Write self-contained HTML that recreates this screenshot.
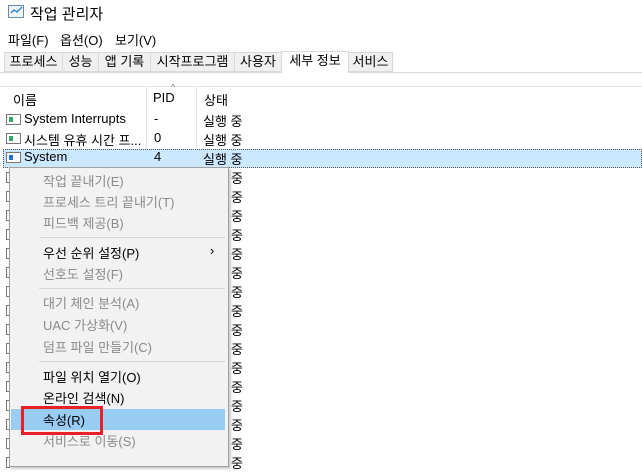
<!DOCTYPE html><html><head><meta charset="utf-8"><style>
*{margin:0;padding:0;box-sizing:border-box}
body{width:642px;height:458px;overflow:hidden;background:#fff;position:relative;font-family:"Liberation Sans","Noto Sans CJK KR","NanumGothic",sans-serif;font-size:13px;color:#000}
.a{position:absolute;white-space:nowrap}
.tab{position:absolute;top:52px;height:20px;border:1px solid #d9d9d9;background:#f0f0f0;line-height:18px;text-align:center;font-size:13px}
.ic{position:absolute;left:6px;width:15px;height:11px;border:1px solid #777;background:#fff}
.ic i{position:absolute;left:2px;top:2px;width:4px;height:5px;background:#3a6}
.m{position:absolute;left:43px;font-size:13px}
.g{color:#8a8a8a}
.sep{position:absolute;left:39px;width:186px;height:1px;background:#d7d7d7}
</style></head><body>
<div class="a" style="left:8px;top:5px;width:16px;height:13px;border:1px solid #6b8aa8;background:#eef6fb"></div>
<svg class="a" style="left:10px;top:6px" width="14" height="10"><polyline points="1,7 4,4 7,6 12,1" fill="none" stroke="#2a7fd0" stroke-width="1.3"/></svg>
<div class="a" style="left:30px;top:3px;font-size:15px">작업 관리자</div>
<div class="a" style="left:8px;top:30px">파일(F)</div>
<div class="a" style="left:60px;top:30px">옵션(O)</div>
<div class="a" style="left:115px;top:30px">보기(V)</div>
<div class="a" style="left:0;top:72px;width:642px;height:1px;background:#d9d9d9"></div>
<div class="tab" style="left:4px;width:59px">프로세스</div>
<div class="tab" style="left:62px;width:37px">성능</div>
<div class="tab" style="left:98px;width:53px">앱 기록</div>
<div class="tab" style="left:150px;width:85px">시작프로그램</div>
<div class="tab" style="left:234px;width:48px">사용자</div>
<div class="tab" style="left:281px;top:51px;height:22px;width:68px;background:#fff;border-bottom:none">세부 정보</div>
<div class="tab" style="left:348px;width:45px">서비스</div>
<div class="a" style="left:0;top:86px;width:642px;height:1px;background:#e5e5e5"></div>
<div class="a" style="left:146px;top:86px;width:1px;height:372px;background:#e5e5e5"></div>
<div class="a" style="left:196px;top:86px;width:1px;height:372px;background:#e5e5e5"></div>
<div class="a" style="left:13px;top:90px">이름</div>
<div class="a" style="left:153px;top:90px">PID</div>
<div class="a" style="left:171px;top:82px;font-size:9px;color:#777">^</div>
<div class="a" style="left:204px;top:90px">상태</div>
<div class="ic" style="top:114px"><i></i></div><div class="a" style="left:24px;top:111px">System Interrupts</div><div class="a" style="left:154px;top:111px">-</div><div class="a" style="left:203px;top:111px">실행 중</div>
<div class="ic" style="top:133px"><i></i></div><div class="a" style="left:24px;top:130px">시스템 유휴 시간 프...</div><div class="a" style="left:154px;top:130px">0</div><div class="a" style="left:203px;top:130px">실행 중</div>
<div class="a" style="left:3px;top:149px;width:639px;height:19px;background:#cce8ff;border:1px dotted #555"></div>
<div class="ic" style="top:152px"><i style="background:#1a6fd8"></i></div><div class="a" style="left:24px;top:149px">System</div><div class="a" style="left:154px;top:149px">4</div><div class="a" style="left:203px;top:149px">실행 중</div>
<div id="z"></div>
<script>
var s='';for(var y=168;y<458;y+=19){s+='<div class="a" style="left:231px;top:'+y+'px">중</div><div class="a" style="left:6px;top:'+(y+4)+'px;width:4px;height:11px;border:1px solid #777;border-right:none"></div>';}
document.getElementById('z').innerHTML=s;
</script>
<div class="a" style="left:9px;top:167px;width:220px;height:300px;background:#f2f2f2;border:1px solid #a0a0a0;box-shadow:2px 2px 2px rgba(0,0,0,.2)"></div>
<div class="m g" style="top:171px">작업 끝내기(E)</div>
<div class="m g" style="top:192px">프로세스 트리 끝내기(T)</div>
<div class="m g" style="top:213px">피드백 제공(B)</div>
<div class="sep" style="top:237px"></div>
<div class="m" style="top:243px">우선 순위 설정(P)</div>
<div class="a" style="left:210px;top:243px">›</div>
<div class="m g" style="top:264px">선호도 설정(F)</div>
<div class="sep" style="top:288px"></div>
<div class="m g" style="top:293px">대기 체인 분석(A)</div>
<div class="m g" style="top:315px">UAC 가상화(V)</div>
<div class="m g" style="top:337px">덤프 파일 만들기(C)</div>
<div class="sep" style="top:361px"></div>
<div class="m" style="top:367px">파일 위치 열기(O)</div>
<div class="m" style="top:388px">온라인 검색(N)</div>
<div class="a" style="left:11px;top:409px;width:214px;height:21px;background:#99ccf3"></div>
<div class="m" style="top:410px">속성(R)</div>
<div class="a" style="left:21px;top:406px;width:82px;height:29px;border:3px solid #e8202a"></div>
<div class="m g" style="top:431px">서비스로 이동(S)</div>
</body></html>
